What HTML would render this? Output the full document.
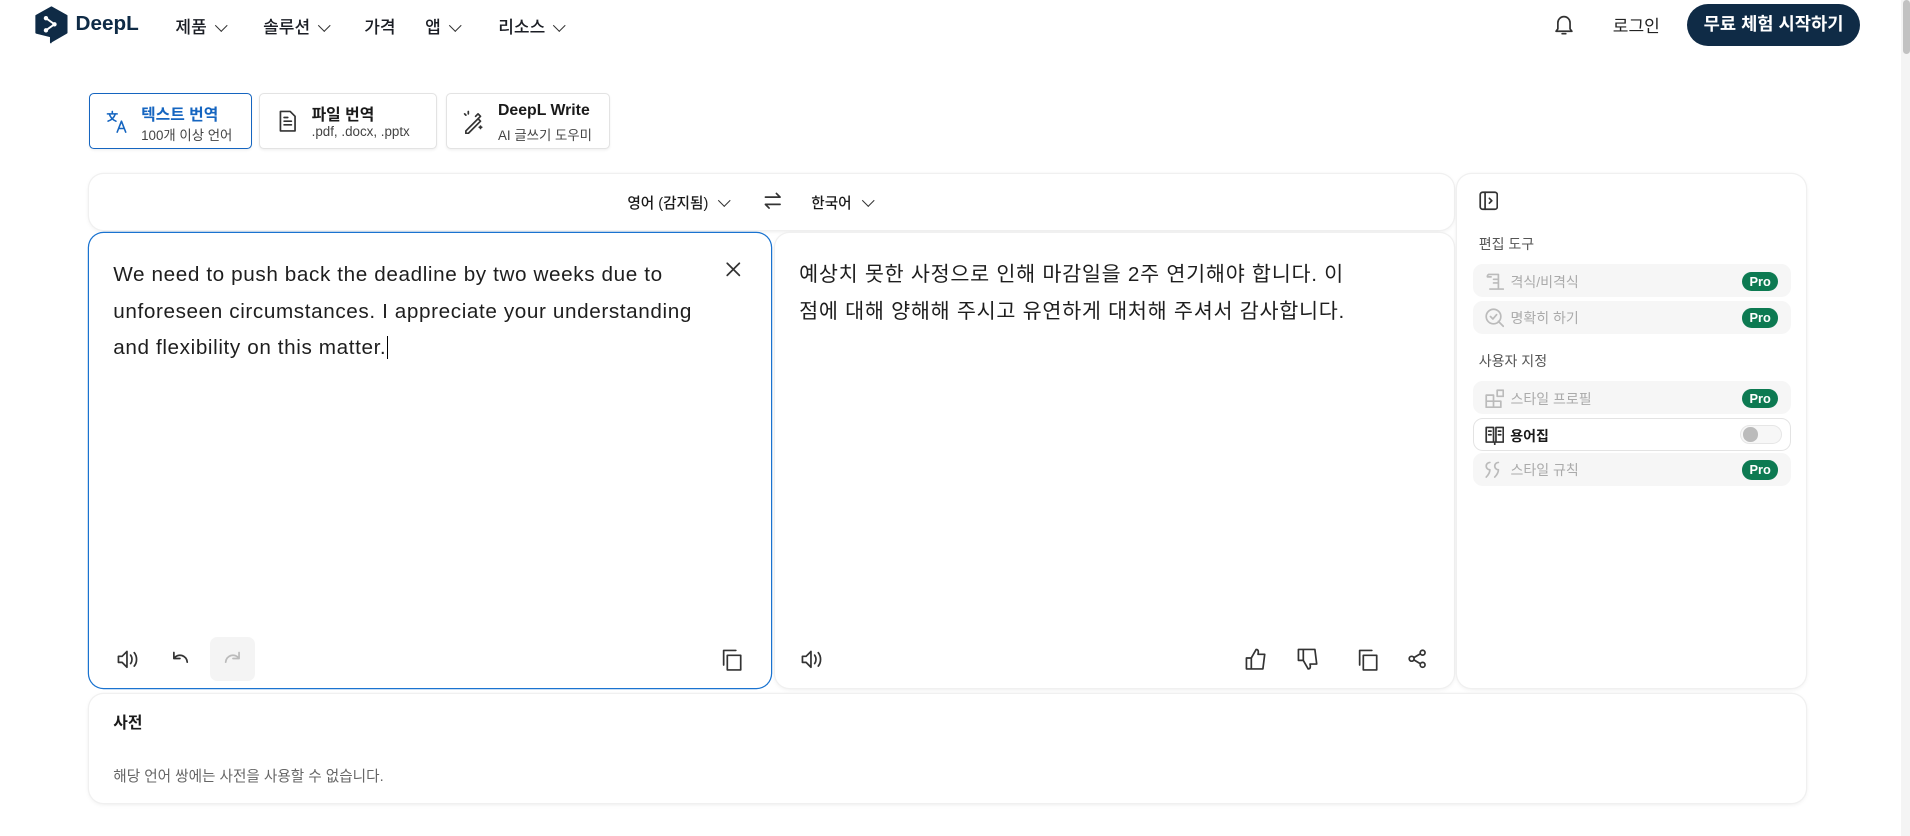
<!DOCTYPE html>
<html><head><meta charset="utf-8"><style>
*{box-sizing:border-box;margin:0;padding:0}
html,body{width:1910px;height:836px;overflow:hidden;background:#fff}
#w{zoom:1.21811;width:1568px;height:686px;position:relative;font-family:"Liberation Sans","Noto Sans CJK KR",sans-serif;color:#1a1a1a}
.a{position:absolute}
.nav{font-size:14px;font-weight:500;color:#1b1e25;top:11px}
.chev{display:inline-block;width:7px;height:7px;border-right:1.5px solid #333;border-bottom:1.5px solid #333;transform:rotate(45deg);margin-left:8px;position:relative;top:-3px}
.tab{top:76px;height:46px;border:1px solid #e3e3e3;border-radius:4px;background:#fff;box-shadow:0 1px 2px rgba(0,0,0,.06)}
.tab b{position:absolute;left:42px;top:7px;font-size:13px;font-weight:700}
.tab span{position:absolute;left:42px;top:25px;font-size:11px;color:#444}
.card{background:#fff;border-radius:12px;box-shadow:0 0 0 1px #f0f0f0,0 1px 4px rgba(0,0,0,.08)}
.item{left:13px;width:261px;height:27px;border-radius:8px;background:#f6f6f6;font-size:11.5px;color:#aaa}
.item span{position:absolute;left:31px;top:6px}
.pro{position:absolute;right:10px;top:6px;width:30px;height:16px;border-radius:8px;background:#0d7a52;color:#fff;font-size:10.5px;font-weight:700;text-align:center;line-height:16px}
svg{position:absolute;fill:none;stroke:#333;stroke-width:1.4;stroke-linecap:round;stroke-linejoin:round}
</style></head><body><div id="w">
<svg style="left:29px;top:5px" width="27" height="31" viewBox="0 0 27 31"><path d="M13.5 1L26 8v14l-13 7.5V30L13 25 1 22V8z" fill="#0f2b46" stroke="#0f2b46"/><path d="M9 10l7 5-7 5" stroke="#fff" stroke-width="1.6"/><circle cx="9" cy="10" r="1.8" fill="#fff" stroke="none"/><circle cx="16" cy="15" r="1.8" fill="#fff" stroke="none"/><circle cx="9" cy="20" r="1.8" fill="#fff" stroke="none"/></svg>
<div class="a" style="left:62px;top:10px;font-size:17px;font-weight:600;color:#0f2b46">DeepL</div>
<div class="a nav" style="left:144px">제품<i class="chev"></i></div>
<div class="a nav" style="left:216px">솔루션<i class="chev"></i></div>
<div class="a nav" style="left:299px">가격</div>
<div class="a nav" style="left:349px">앱<i class="chev"></i></div>
<div class="a nav" style="left:409px">리소스<i class="chev"></i></div>
<svg style="left:1275px;top:11px" width="18" height="19" viewBox="0 0 18 19"><path d="M4 13V8a5 5 0 0110 0v5l1.5 2h-13z M7.5 17h3"/></svg>
<div class="a" style="left:1324px;top:10px;font-size:14px;color:#222">로그인</div>
<div class="a" style="left:1385px;top:3px;width:142px;height:35px;border-radius:18px;background:#0f2b46;color:#fff;font-size:14.5px;font-weight:600;text-align:center;line-height:34px">무료 체험 시작하기</div>
<div class="a" style="left:1561px;top:0;width:7px;height:686px;background:#f4f4f4"></div>
<div class="a" style="left:1562px;top:0;width:6px;height:44px;background:#c2c2c2;border-radius:3px"></div>
<div class="a tab" style="left:73px;width:134px;border-color:#1565c0">
<svg style="left:12px;top:13px" width="20" height="20" viewBox="0 0 20 20"><path d="M2 4h8M6 2v2M3.5 4c1 3 3 5 5.5 6M8.5 4c-1 3-3 5-6 6" stroke="#1565c0" stroke-width="1.3"/><path d="M10 19l3.5-9 3.5 9M11.3 16h4.4" stroke="#1565c0" stroke-width="1.3"/></svg>
<b style="color:#1565c0">텍스트 번역</b><span>100개 이상 언어</span></div>
<div class="a tab" style="left:213px;width:146px">
<svg style="left:14px;top:13px" width="16" height="20" viewBox="0 0 16 20"><path d="M2 2h8l4 4v12H2z M5 10h6M5 13h6M5 7h3"/></svg>
<b>파일 번역</b><span>.pdf, .docx, .pptx</span></div>
<div class="a tab" style="left:366px;width:135px">
<svg style="left:12px;top:13px" width="20" height="20" viewBox="0 0 20 20"><path d="M4 18l10-10 2 2-10 10-2 0z M12 6l2-2 2 2-2 2 M3 4l1 1 M6 2v2 M16 14v2 M15 15h2"/></svg>
<b>DeepL Write</b><span>AI 글쓰기 도우미</span></div>
<div class="a card" style="left:73px;top:143px;width:1121px;height:46px"></div>
<div class="a" style="left:515px;top:158px;font-size:12px;font-weight:500">영어 (감지됨)<i class="chev" style="margin-left:10px"></i></div>
<svg style="left:626px;top:157px" width="16" height="16" viewBox="0 0 16 16"><path d="M2 5h12l-3-3 M14 11H2l3 3"/></svg>
<div class="a" style="left:666px;top:158px;font-size:12px;font-weight:500">한국어<i class="chev" style="margin-left:10px"></i></div>
<div class="a card" style="left:73px;top:191px;width:560px;height:374px;box-shadow:0 0 0 1px #1a73d0"></div>
<div class="a" style="left:93px;top:211px;white-space:nowrap;font-size:17px;line-height:30px;color:#1e1e1e;letter-spacing:0.5px">We need to push back the deadline by two weeks due to<br>unforeseen circumstances. I appreciate your understanding<br>and flexibility on this matter.<span style="border-left:1px solid #000;margin-left:1px"></span></div>
<svg style="left:596px;top:215px" width="12" height="12" viewBox="0 0 12 12"><path d="M1 1l10 10M11 1L1 11"/></svg>
<svg style="left:95px;top:533px" width="22" height="17" viewBox="0 0 22 17"><path d="M2 6h3l4-4v13l-4-4H2z M12 5c1.5 2 1.5 5 0 7 M15 3c2.5 3 2.5 8 0 11"/></svg>
<svg style="left:139px;top:534px" width="18" height="16" viewBox="0 0 18 16"><path d="M4 2v5h5 M4 7a6 6 0 0111 3"/></svg>
<div class="a" style="left:172px;top:523px;width:37px;height:36px;background:#f4f4f4;border-radius:6px"></div>
<svg style="left:182px;top:534px" width="18" height="16" viewBox="0 0 18 16"><path d="M14 2v5H9 M14 7a6 6 0 00-11 3" stroke="#bbb"/></svg>
<svg style="left:591px;top:532px" width="20" height="20" viewBox="0 0 20 20"><path d="M6 6h11v12H6z M3 14V2h10"/></svg>
<div class="a card" style="left:636px;top:191px;width:558px;height:374px"></div>
<div class="a" style="left:656px;top:211px;white-space:nowrap;font-size:17px;line-height:30px;color:#1e1e1e;letter-spacing:0.6px">예상치 못한 사정으로 인해 마감일을 2주 연기해야 합니다. 이<br>점에 대해 양해해 주시고 유연하게 대처해 주셔서 감사합니다.</div>
<svg style="left:657px;top:533px" width="22" height="17" viewBox="0 0 22 17"><path d="M2 6h3l4-4v13l-4-4H2z M12 5c1.5 2 1.5 5 0 7 M15 3c2.5 3 2.5 8 0 11"/></svg>
<svg style="left:1021px;top:531px" width="20" height="20" viewBox="0 0 20 20"><path d="M2 9h4v9H2z M6 9l4-7c2 0 2 2 1.5 4H17l-1.5 12H6"/></svg>
<svg style="left:1064px;top:531px" width="20" height="20" viewBox="0 0 20 20"><path d="M2 2h4v9H2z M6 11l4 7c2 0 2-2 1.5-4H17L15.5 2H6"/></svg>
<svg style="left:1113px;top:532px" width="20" height="20" viewBox="0 0 20 20"><path d="M6 6h11v12H6z M3 14V2h10"/></svg>
<svg style="left:1156px;top:533px" width="16" height="16" viewBox="0 0 16 16"><circle cx="12" cy="3" r="2"/><circle cx="3" cy="8" r="2"/><circle cx="12" cy="13" r="2"/><path d="M5 7l5-3 M5 9l5 3"/></svg>
<div class="a card" style="left:1196px;top:143px;width:287px;height:422px">
<svg style="left:18px;top:14px" width="16" height="16" viewBox="0 0 16 16"><rect x="1" y="1" width="14" height="14" rx="2"/><path d="M5 1v14 M8.5 6l2 2-2 2"/></svg>
<div class="a" style="left:18px;top:49px;font-size:11.5px;color:#555">편집 도구</div>
<div class="a item" style="top:74px"><span>격식/비격식</span><div class="pro">Pro</div></div>
<div class="a item" style="top:104px"><span>명확히 하기</span><div class="pro">Pro</div></div>
<div class="a" style="left:18px;top:145px;font-size:11.5px;color:#555">사용자 지정</div>
<div class="a item" style="top:170px"><span>스타일 프로필</span><div class="pro">Pro</div></div>
<div class="a item" style="top:200px;background:#fff;border:1px solid #e3e3e3;color:#1a1a1a;font-weight:700"><span style="left:30px">용어집</span>
<div style="position:absolute;right:6px;top:5px;width:35px;height:16px;border-radius:8px;border:1px solid #e6e6e6;background:#f7f7f7"><div style="position:absolute;left:2px;top:1px;width:12px;height:12px;border-radius:6px;background:#bbb"></div></div></div>
<div class="a item" style="top:229px"><span>스타일 규칙</span><div class="pro">Pro</div></div>
<svg style="left:23px;top:80px" width="16" height="16" viewBox="0 0 16 16"><path d="M3 2h8v12H4 M3 2a2 2 0 00-1 2h3 M7 6h3 M7 9h3 M4 14h11" stroke="#bbb"/></svg>
<svg style="left:23px;top:110px" width="16" height="16" viewBox="0 0 16 16"><circle cx="7" cy="7" r="6" stroke="#bbb"/><path d="M4.5 7l2 2 3-3.5 M11 11l4 4" stroke="#bbb"/></svg>
<svg style="left:23px;top:176px" width="16" height="16" viewBox="0 0 16 16"><path d="M1 5h6v10H1z M1 10h12v5H7 M10 1h5v5h-5z" stroke="#bbb"/></svg>
<svg style="left:23px;top:206px" width="16" height="16" viewBox="0 0 16 16"><path d="M1 2h6v12H1z M9 2h6v12H9z M8 14v2 M3 5h2 M3 8h2 M11 5h2 M11 8h2"/></svg>
<svg style="left:23px;top:235px" width="16" height="16" viewBox="0 0 16 16"><path d="M4 2a3 3 0 100 6c0 3-2 5-3 6 M11 2a3 3 0 100 6c0 3-2 5-3 6" stroke="#bbb"/></svg>
</div>
<div class="a card" style="left:73px;top:570px;width:1410px;height:89px"></div>
<div class="a" style="left:93px;top:583px;font-size:13px;font-weight:700">사전</div>
<div class="a" style="left:93px;top:628px;font-size:12px;color:#666">해당 언어 쌍에는 사전을 사용할 수 없습니다.</div>
</div></body></html>
